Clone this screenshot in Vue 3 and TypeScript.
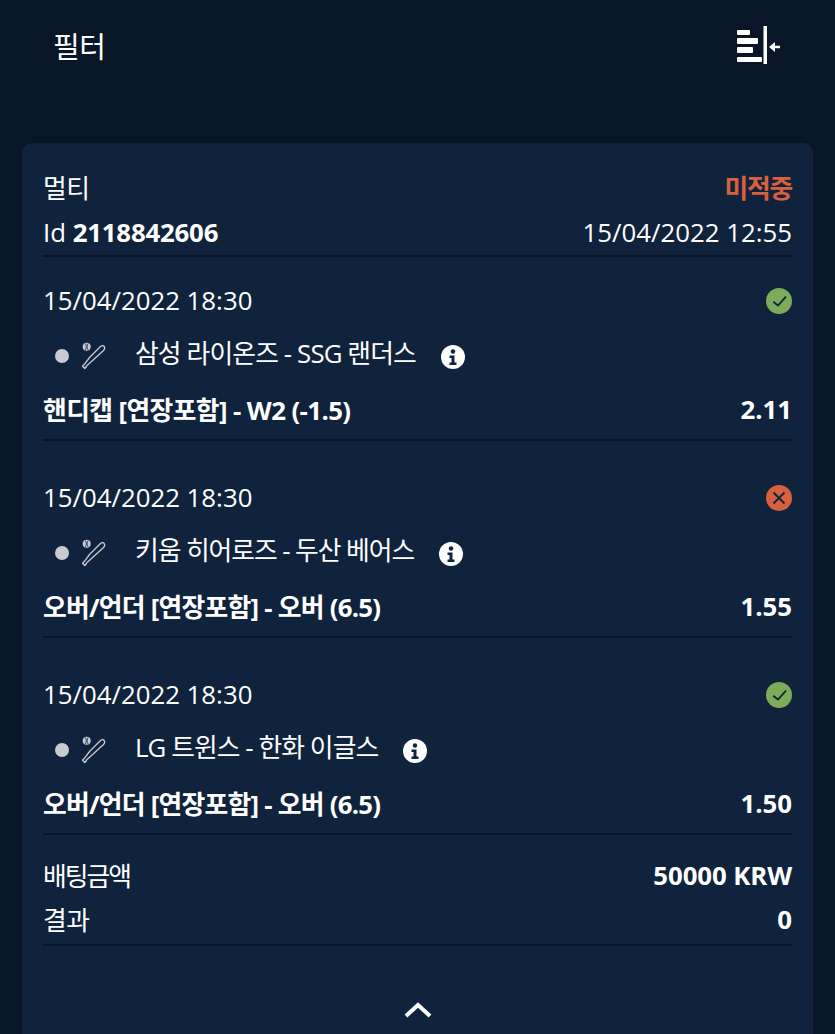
<script setup lang="ts">
interface Bet {
  date: string
  teams: string
  market: string
  odds: string
  won: boolean
  // the hangul runs narrower than Noto here, tracking differs per string
  teamsTrack: string
  marketTrack: string
}

const bets: Bet[] = [
  { date: '15/04/2022 18:30', teams: '삼성 라이온즈 - SSG 랜더스', market: '핸디캡 [연장포함] - W2 (-1.5)', odds: '2.11', won: true, teamsTrack: '-0.87px', marketTrack: '-0.6px' },
  { date: '15/04/2022 18:30', teams: '키움 히어로즈 - 두산 베어스', market: '오버/언더 [연장포함] - 오버 (6.5)', odds: '1.55', won: false, teamsTrack: '-1.07px', marketTrack: '-0.75px' },
  { date: '15/04/2022 18:30', teams: 'LG 트윈스 - 한화 이글스', market: '오버/언더 [연장포함] - 오버 (6.5)', odds: '1.50', won: true, teamsTrack: '-0.93px', marketTrack: '-0.75px' },
]
</script>

<template>
  <div class="page">
    <header class="top">
      <span class="top__title">필터</span>
      <svg class="top__icon" width="43" height="38" viewBox="0 0 43 38">
        <g fill="#fff">
          <rect x="0" y="4" width="13" height="5" rx="1" />
          <rect x="0" y="12" width="21" height="6" rx="1" />
          <rect x="0" y="21" width="16" height="6" rx="1" />
          <rect x="0" y="31" width="25" height="5" rx="1" />
          <rect x="26.500" y="0" width="3.500" height="38" />
          <path d="M32 21l6-5v3.700h5v2.600h-5v3.700z" />
        </g>
      </svg>
    </header>

    <section class="card">
      <div class="row row--type">
        <span class="tight">멀티</span>
        <span class="lost">미적중</span>
      </div>
      <div class="row row--id">
        <span>Id <b class="id">2118842606</b></span>
        <span>15/04/2022 12:55</span>
      </div>

      <div v-for="bet in bets" :key="bet.market + bet.odds" class="bet">
        <div class="row bet__date">
          <span>{{ bet.date }}</span>
          <svg v-if="bet.won" class="status" width="26" height="26" viewBox="0 0 26 26">
            <circle cx="13" cy="13" r="13" fill="#7dab59" />
            <path d="M7.300 13.700l4.700 3.800 8-8.800" fill="none" stroke="#10233d" stroke-width="1.800" />
          </svg>
          <svg v-else class="status" width="26" height="26" viewBox="0 0 26 26">
            <circle cx="13" cy="13" r="13" fill="#d9603f" />
            <path d="M7.500 7.500l11 11M18.500 7.500l-11 11" fill="none" stroke="#10233d" stroke-width="1.800" />
          </svg>
        </div>
        <div class="bet__match">
          <span class="dot" />
          <svg class="bat" width="28" height="30" viewBox="0 0 28 30">
            <circle cx="6.700" cy="5.700" r="4" fill="#c9cbd1" />
            <path d="M5.200 2.500c1.500 2 1.500 4.500 0 6.500M8.200 2.500c-1.500 2-1.500 4.500 0 6.500" fill="none" stroke="#10233d" stroke-width="0.800" />
            <path d="M2.500 25.200L4.800 27.500 6.300 26 6 25.400 12 20 23.500 9.500C26 7 24 3 20.500 5.500L9.500 16.500 4.800 22.800 3.900 23.800Z" fill="none" stroke="#c9cbd1" stroke-width="1.300" stroke-linejoin="round" />
          </svg>
          <span class="bet__teams" :style="{ letterSpacing: bet.teamsTrack }">{{ bet.teams }}</span>
          <svg class="info" width="24" height="24" viewBox="0 0 24 24">
            <circle cx="12" cy="12" r="12" fill="#fff" />
            <circle cx="12" cy="6.500" r="2.200" fill="#10233d" />
            <path d="M8.500 10.500h5v7h2v2.500h-7v-2.500h2v-4.500h-2z" fill="#10233d" />
          </svg>
        </div>
        <div class="row bet__market">
          <b :style="{ letterSpacing: bet.marketTrack }">{{ bet.market }}</b>
          <b>{{ bet.odds }}</b>
        </div>
      </div>

      <div class="row row--stake">
        <span class="stake-label">배팅금액</span>
        <b class="amount">50000 KRW</b>
      </div>
      <div class="row row--result">
        <span class="tight">결과</span>
        <b>0</b>
      </div>

      <div class="toggle">
        <svg width="28" height="16" viewBox="0 0 28 16">
          <path d="M2 14L14 3l12 11" fill="none" stroke="#fff" stroke-width="4" />
        </svg>
      </div>
    </section>
  </div>
</template>

<style>
html,
body {
  margin: 0;
  background: #081628;
}
</style>

<style scoped>
.page {
  height: 1034px;
  overflow: hidden;
  background: #081628;
  color: #fff;
  font-family: "Open Sans", "Noto Sans CJK KR", sans-serif;
  font-size: 25.800px;
  box-sizing: border-box;
  padding: 0 22px;
}

.top {
  height: 143px;
  display: flex;
  justify-content: space-between;
  align-items: flex-start;
  padding: 27px 33px 0 31px;
  box-sizing: border-box;
}

.top__title {
  line-height: 40px;
  font-size: 29px;
  letter-spacing: -0.500px;
}

.top__icon {
  margin-top: -1px;
}

.card {
  background: #10233d;
  border-radius: 10px 10px 0 0;
  padding: 22px 21px 0;
  height: 900px;
  box-sizing: border-box;
}

.row {
  display: flex;
  justify-content: space-between;
  align-items: center;
}

b {
  font-weight: 700;
}

.id {
  letter-spacing: -0.200px;
}

.amount {
  letter-spacing: -0.100px;
}

.tight {
  letter-spacing: -0.500px;
}

.lost {
  color: #d9603f;
  font-weight: 700;
  letter-spacing: -1.200px;
}

.row--type {
  height: 44px;
}

.row--id {
  height: 42px;
  margin-top: 2px;
  border-bottom: 2px solid #081628;
  padding-bottom: 2px;
}

.bet {
  height: 184px;
  border-bottom: 2px solid #081628;
  box-sizing: border-box;
}

.bet + .bet {
  margin-top: 13px;
}

.bet__date {
  height: 41px;
  padding-top: 22px;
}

.status {
  margin-top: 2px;
}

.bet__match {
  display: flex;
  align-items: center;
  height: 50px;
  padding-left: 12px;
  margin-top: 11px;
}

.dot {
  width: 14px;
  height: 14px;
  border-radius: 50%;
  background: #c9cbd1;
  margin-right: 11px;
}

.bat {
  margin-right: 27px;
}

.bet__teams {
  padding-bottom: 8px;
}

.info {
  margin-left: 25px;
  margin-top: 2px;
}

.bet__market {
  height: 48px;
  margin-top: 4px;
}

.row--stake {
  height: 44px;
  margin-top: 18px;
}

.stake-label {
  letter-spacing: -2px;
}

.row--result {
  height: 44px;
  padding-bottom: 3px;
  border-bottom: 2px solid #081628;
}

.toggle {
  display: flex;
  justify-content: center;
  padding-top: 56px;
}
</style>
